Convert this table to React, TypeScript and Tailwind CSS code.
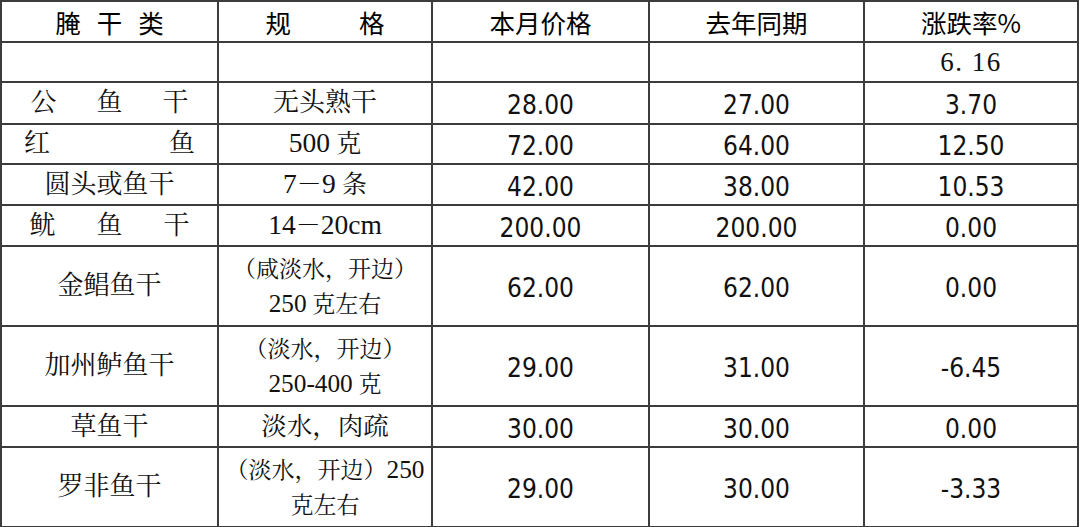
import React from "react";

const serif = "font-['Liberation_Serif','Noto_Serif_CJK_SC','Noto_Sans_CJK_SC',serif]";
const num = "font-['DejaVu_Sans_Condensed','DejaVu_Sans',sans-serif] text-[26px] leading-[30px]";
const head = "font-['Noto_Sans_CJK_SC',sans-serif] font-normal text-[25.5px] leading-[30px] text-black";
const cell = "border-2 border-[#3c3c3c] p-0 text-center align-middle text-[#111] overflow-hidden";

function L({ children }: { children: React.ReactNode }) {
  return <span className="text-[1.1em] leading-none">{children}</span>;
}

function Spread({ chars, gap }: { chars: string[]; gap: string }) {
  return (
    <div className={`flex justify-center ${gap}`}>
      {chars.map((c, i) => (
        <span key={i}>{c}</span>
      ))}
    </div>
  );
}

type Row = {
  h: string;
  name: React.ReactNode;
  spec: React.ReactNode;
  a: string;
  b: string;
  c: string;
};

const rows: Row[] = [
  { h: "h-[42px]", name: <Spread chars={["公", "鱼", "干"]} gap="gap-[40px]" />, spec: <div className="text-[26px] leading-[30px]">无头熟干</div>, a: "28.00", b: "27.00", c: "3.70" },
  { h: "h-[40px]", name: <Spread chars={["红", "鱼"]} gap="gap-[119px]" />, spec: <div className="text-[25px] leading-[30px]"><L>500</L> 克</div>, a: "72.00", b: "64.00", c: "12.50" },
  { h: "h-[41px]", name: <span>圆头或鱼干</span>, spec: <div className="text-[25px] leading-[30px]"><L>7</L>－<L>9</L> 条</div>, a: "42.00", b: "38.00", c: "10.53" },
  { h: "h-[41px]", name: <Spread chars={["鱿", "鱼", "干"]} gap="gap-[41px]" />, spec: <div className="text-[25px] leading-[30px]"><L>14</L>－<L>20cm</L></div>, a: "200.00", b: "200.00", c: "0.00" },
  {
    h: "h-[80px]",
    name: <span>金鲳鱼干</span>,
    spec: (
      <div className="text-[23px] leading-[35px] pt-[2px]">
        <div>（咸淡水，开边）</div>
        <div><L>250</L> 克左右</div>
      </div>
    ),
    a: "62.00",
    b: "62.00",
    c: "0.00",
  },
  {
    h: "h-[80px]",
    name: <span>加州鲈鱼干</span>,
    spec: (
      <div className="text-[23px] leading-[35px] pt-[2px]">
        <div>（淡水，开边）</div>
        <div><L>250-400</L> 克</div>
      </div>
    ),
    a: "29.00",
    b: "31.00",
    c: "-6.45",
  },
  { h: "h-[41px]", name: <span>草鱼干</span>, spec: <div className="text-[25.5px] leading-[30px]">淡水，肉疏</div>, a: "30.00", b: "30.00", c: "0.00" },
  {
    h: "h-[80px]",
    name: <span>罗非鱼干</span>,
    spec: (
      <div className="text-[23px] leading-[35px] pt-[2px]">
        <div>（淡水，开边）<L>250</L></div>
        <div>克左右</div>
      </div>
    ),
    a: "29.00",
    b: "30.00",
    c: "-3.33",
  },
];

export default function App() {
  return (
    <div className="w-[1080px] h-[527px] bg-white overflow-hidden">
      <table className="border-collapse table-fixed w-[1077px]">
        <colgroup>
          <col className="w-[217px]" />
          <col className="w-[214px]" />
          <col className="w-[217px]" />
          <col className="w-[215px]" />
          <col className="w-[214px]" />
        </colgroup>
        <tbody>
          <tr className="h-[41px]">
            <td className={`${cell} ${head}`}>
              <Spread chars={["腌", "干", "类"]} gap="gap-[16px]" />
            </td>
            <td className={`${cell} ${head}`}>
              <Spread chars={["规", "格"]} gap="gap-[68px]" />
            </td>
            <td className={`${cell} ${head}`}>本月价格</td>
            <td className={`${cell} ${head}`}>去年同期</td>
            <td className={`${cell} ${head}`}>涨跌率%</td>
          </tr>
          <tr className="h-[40px]">
            <td className={cell}></td>
            <td className={cell}></td>
            <td className={cell}></td>
            <td className={cell}></td>
            <td className={`${cell} ${serif} text-[27px] leading-[30px] tracking-[1.5px]`}>6. 16</td>
          </tr>
          {rows.map((r, i) => (
            <tr key={i} className={r.h}>
              <td className={`${cell} ${serif} text-[26px] leading-[30px]`}>{r.name}</td>
              <td className={`${cell} ${serif}`}>{r.spec}</td>
              <td className={`${cell} ${num}`}>
                <span className="relative top-[2px]">{r.a}</span>
              </td>
              <td className={`${cell} ${num}`}>
                <span className="relative top-[2px]">{r.b}</span>
              </td>
              <td className={`${cell} ${num}`}>
                <span className="relative top-[2px]">{r.c}</span>
              </td>
            </tr>
          ))}
        </tbody>
      </table>
    </div>
  );
}
